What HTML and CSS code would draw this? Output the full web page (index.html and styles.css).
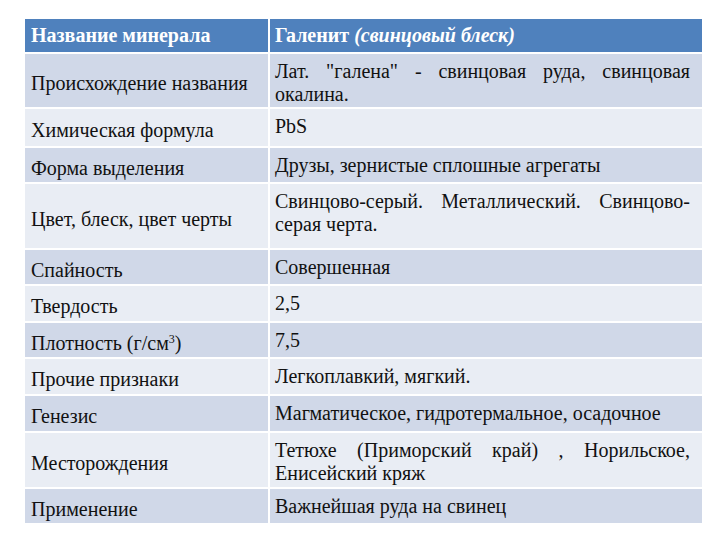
FILE: index.html
```html
<!DOCTYPE html>
<html lang="ru">
<head>
<meta charset="utf-8">
<title>Галенит</title>
<link rel="stylesheet" href="styles.css">
</head>
<body>
<div class="page">
  <div class="mineral">
    <div class="cell hd name"><span>Название минерала</span></div>
    <div class="cell hd val"><span>Галенит <em>(свинцовый блеск)</em></span></div>

    <div class="cell dark name"><span>Происхождение названия</span></div>
    <div class="cell dark val">Лат. "галена" - свинцовая руда, свинцовая окалина.</div>

    <div class="cell light name"><span>Химическая формула</span></div>
    <div class="cell light val">PbS</div>

    <div class="cell dark name"><span>Форма выделения</span></div>
    <div class="cell dark val">Друзы, зернистые сплошные агрегаты</div>

    <div class="cell light name"><span>Цвет, блеск, цвет черты</span></div>
    <div class="cell light val">Свинцово-серый. Металлический. Свинцово-серая черта.</div>

    <div class="cell dark name"><span>Спайность</span></div>
    <div class="cell dark val">Совершенная</div>

    <div class="cell light name"><span>Твердость</span></div>
    <div class="cell light val">2,5</div>

    <div class="cell dark name"><span>Плотность (г/см<sup>3</sup>)</span></div>
    <div class="cell dark val">7,5</div>

    <div class="cell light name"><span>Прочие признаки</span></div>
    <div class="cell light val">Легкоплавкий, мягкий.</div>

    <div class="cell dark name"><span>Генезис</span></div>
    <div class="cell dark val">Магматическое, гидротермальное, осадочное</div>

    <div class="cell light name"><span>Месторождения</span></div>
    <div class="cell light val">Тетюхе (Приморский край) , Норильское, Енисейский кряж</div>

    <div class="cell dark name"><span>Применение</span></div>
    <div class="cell dark val">Важнейшая руда на свинец</div>
  </div>
</div>
</body>
</html>
```

FILE: styles.css
```css
html, body {
  margin: 0;
  padding: 0;
  background: #ffffff;
}

body {
  font-family: "Liberation Serif", "Times New Roman", serif;
  font-size: 20px;
  line-height: 23px;
  color: #111111;
}

.page {
  padding: 19px 0 0 25px;
}

.mineral {
  width: 677px;
  display: grid;
  grid-template-columns: 243px 432px;
  grid-template-rows: 33px 53px 37px 34px 64px 34px 35px 34px 35px 35px 54px 34px;
  gap: 2px;
  background: #ffffff;
}

.cell {
  box-sizing: border-box;
}

.name {
  display: flex;
  align-items: center;
  padding: 6px 4px 0 6px;
}

.val {
  padding: 6px 12px 0 5px;
  text-align: justify;
}

.hd {
  background: #4f81bd;
  color: #ffffff;
  font-weight: bold;
  display: flex;
  align-items: center;
  padding-top: 0;
}

.hd em {
  font-style: italic;
}

.dark { background: #d0d8e8; }
.light { background: #e9edf4; }

sup {
  font-size: 12px;
  line-height: 0;
  vertical-align: 7px;
}
```
